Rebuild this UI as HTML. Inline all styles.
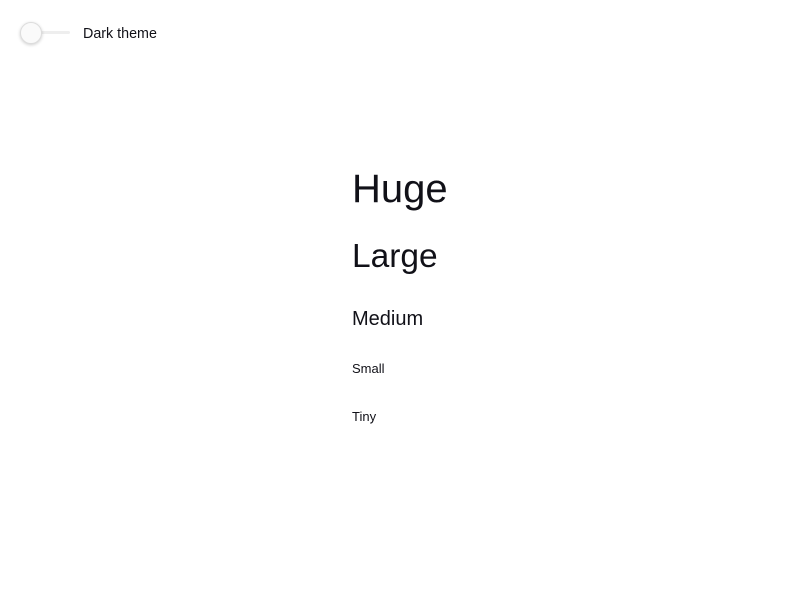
<!DOCTYPE html>
<html><head><meta charset="utf-8"><style>
body{margin:0;width:800px;height:600px;background:#fff;font-family:"Liberation Sans",sans-serif;color:#111118;position:relative;overflow:hidden}
.t{position:absolute;left:352px;white-space:nowrap;line-height:1}
.track{position:absolute;left:22px;top:31px;width:48px;height:3px;background:#eee;border-radius:2px}
.knob{position:absolute;left:20px;top:22px;width:20px;height:20px;border-radius:50%;background:#fafafa;border:1px solid #ddd;box-shadow:0 1px 3px rgba(0,0,0,.2)}
</style></head><body>
<div class="track"></div><div class="knob"></div>
<div class="t" style="left:83px;top:27px;font-size:14.3px">Dark theme</div>
<div class="t" style="top:169px;font-size:40px">Huge</div>
<div class="t" style="top:240px;font-size:33.5px">Large</div>
<div class="t" style="top:309px;font-size:20px">Medium</div>
<div class="t" style="top:362px;font-size:13px">Small</div>
<div class="t" style="top:410px;font-size:13px">Tiny</div>
</body></html>
